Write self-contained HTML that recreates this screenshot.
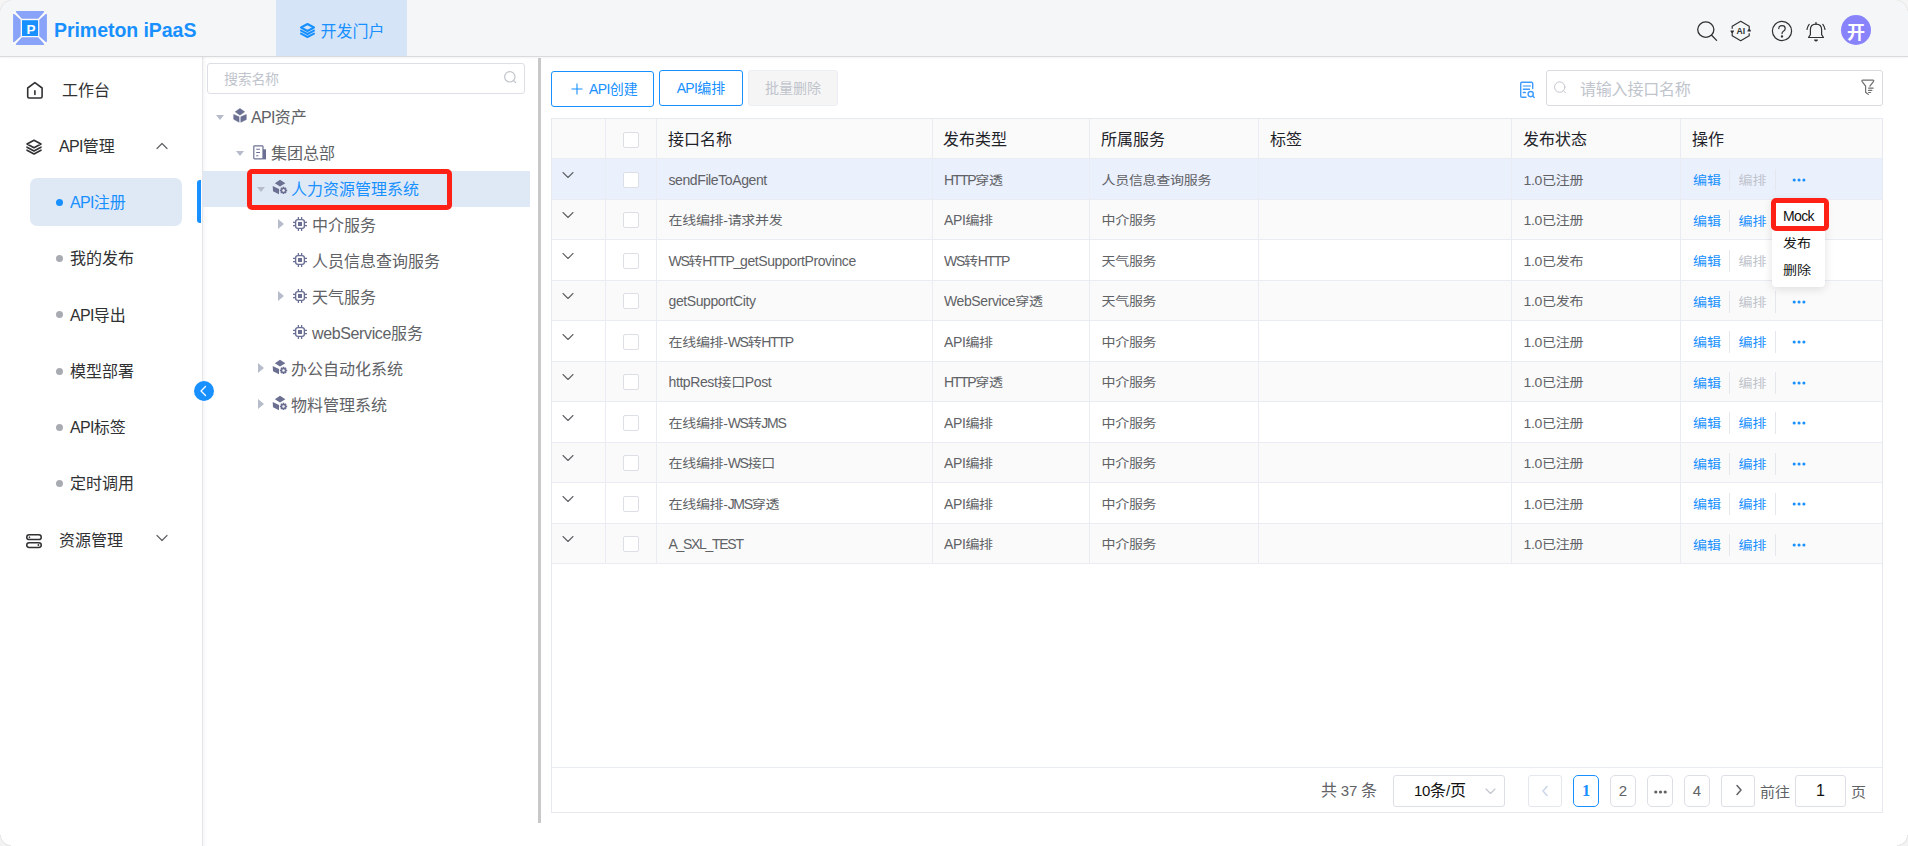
<!DOCTYPE html>
<html lang="zh-CN">
<head>
<meta charset="utf-8">
<title>Primeton iPaaS</title>
<style>
*{box-sizing:border-box;margin:0;padding:0}
html,body{width:1908px;height:846px;overflow:hidden;background:#fff}
body{font-family:"Liberation Sans","Noto Sans CJK SC",sans-serif;color:#606266;font-size:14px;position:relative}
.abs{position:absolute}
.l{letter-spacing:-0.045em}
.td .l{display:inline-block;transform:scaleY(1.1236);transform-origin:50% 74%;letter-spacing:-0.4px}
.td .u{letter-spacing:-1.3px}
/* header */
#hdr{position:absolute;left:0;top:0;width:1908px;height:57px;background:#f5f6f8;border-bottom:1px solid #d9dadd;box-shadow:0 1px 2px rgba(0,0,0,0.05);z-index:2}
#logo{position:absolute;left:13px;top:11px;width:34px;height:34px}
#brand{position:absolute;left:54px;top:17.5px;font-size:19.5px;letter-spacing:-0.05px;font-weight:bold;color:#1890ff;line-height:24px;white-space:nowrap}
#tab{position:absolute;left:276px;top:0;width:131px;height:56px;background:#d6e4f7;color:#1890ff;font-size:16px}
#tab span{position:absolute;left:44.5px;top:20px;line-height:24px;white-space:nowrap}
/* sidebar */
#side{position:absolute;left:0;top:57px;width:203px;height:789px;background:#fff;border-right:1px solid #e4e6ea}
.mi{position:absolute;margin-top:1px;font-size:16px;color:#303133;line-height:24px;white-space:nowrap}
.dot{position:absolute;width:7px;height:7px;border-radius:50%;background:#a8abb2}
/* tree */
#tree{position:absolute;left:203px;top:57px;width:334px;height:789px;background:#fff}
.tn{position:absolute;margin-top:1px;font-size:16px;color:#606266;line-height:24px;white-space:nowrap}
.car{position:absolute;width:0;height:0}
.car.d{border-left:4.5px solid transparent;border-right:4.5px solid transparent;border-top:5.5px solid #b7bcca}
.car.r{border-top:5px solid transparent;border-bottom:5px solid transparent;border-left:6.5px solid #b7bcca;margin-top:-0.5px}
/* main */
.btn{position:absolute;height:36px;border:1px solid #1890ff;border-radius:3px;color:#1890ff;font-size:14px;line-height:34px;text-align:center;background:#fff;white-space:nowrap}
#tbl{position:absolute;left:551px;top:118px;width:1332px;height:695px;border:1px solid #e6e9f0}
.row{position:absolute;left:0;width:1330px;border-bottom:1px solid #e9ecf3}
.vl{position:absolute;top:0;width:1px;background:#e9ecf3}
.th{position:absolute;font-size:16px;color:#1f2329;line-height:24px;white-space:nowrap}
.td{position:absolute;letter-spacing:-0.3px;font-size:14px;transform:scaleY(.89);transform-origin:50% 50%;color:#606266;line-height:20px;white-space:nowrap}
.cb{position:absolute;width:16px;height:16px;border:1px solid #dcdfe6;border-radius:2px;background:#fff}
.op{position:absolute;transform:scaleY(.88);font-size:14px;line-height:20px;color:#1890ff;white-space:nowrap}
.op.dis{color:#c0c4cc}
.sep{position:absolute;width:1px;height:22px;background:#e4e7ed}
.pg{position:absolute;top:775px;height:32px;border:1px solid #dcdfe6;border-radius:5px;background:#fff;font-size:15px;color:#606266;text-align:center;line-height:29px}
</style>
</head>
<body>
<svg width="0" height="0" style="position:absolute">
<defs>
<symbol id="i-cube" viewBox="0 0 14 15">
  <path d="M6.95 0.4 L11.7 3.8 L6.95 7.2 L2.2 3.8 Z" fill="#6b7092" stroke="#6b7092" stroke-width="0.5" stroke-linejoin="round"/>
  <path d="M0.7 6.5 L6.1 8.8 V14.3 L0.7 11.3 Z" fill="#6b7092" stroke="#6b7092" stroke-width="0.5" stroke-linejoin="round"/>
  <path d="M13.3 6.5 L7.8 8.8 V14.3 L13.3 11.6 Z" fill="#6b7092" stroke="#6b7092" stroke-width="0.5" stroke-linejoin="round"/>
</symbol>
<symbol id="i-org" viewBox="0 0 14 15">
  <rect x="0.8" y="0.8" width="9.2" height="13" rx="0.8" fill="none" stroke="#6b7092" stroke-width="1.2"/>
  <path d="M10 4.3 H13 V14.4 H10 Z" fill="#6b7092"/>
  <path d="M3.2 4.3 H7 M3.2 7.5 H7 M3.2 10.7 H5.4" stroke="#6b7092" stroke-width="1.1"/>
</symbol>
<symbol id="i-sys" viewBox="0 0 16 16">
  <path d="M8 0.8 L13.4 4.2 L8 7.6 L2.9 4.2 Z" fill="#6b7092"/>
  <path d="M0.7 7 L7 10 V15.2 L1 12.2 Z" fill="#6b7092"/>
  <circle cx="11.5" cy="11.4" r="2.1" fill="none" stroke="#6b7092" stroke-width="1.7"/>
  <path d="M11.5 7.7 V15.1 M7.8 11.4 H15.2 M8.9 8.8 L14.1 14 M14.1 8.8 L8.9 14" stroke="#6b7092" stroke-width="1.5"/>
  <circle cx="11.5" cy="11.4" r="1.25" fill="#fff" fill-opacity="0.95"/>
</symbol>
<symbol id="i-chip" viewBox="0 0 14 14">
  <rect x="2.6" y="2.6" width="8.8" height="8.8" rx="2.3" fill="none" stroke="#6b7092" stroke-width="1.4"/>
  <rect x="5" y="5" width="4" height="4" fill="#6b7092"/>
  <path d="M5.4 0 V2.5 M8.6 0 V2.5 M5.4 11.5 V14 M8.6 11.5 V14 M0 5.4 H2.5 M0 8.6 H2.5 M11.5 5.4 H14 M11.5 8.6 H14" stroke="#6b7092" stroke-width="1.3"/>
</symbol>
</defs></svg>
<div id="hdr">
  <svg id="logo" viewBox="0 0 34 34">
    <rect x="0" y="0" width="34" height="34" rx="4" fill="#fbfbf9"/>
    <g fill="#89a3f8" stroke="#89a3f8" stroke-width="1.4" stroke-linejoin="round">
      <path id="tz" d="M3.5 0.8 L30.5 0.8 L24.9 7 L9.1 7 Z"/>
      <use href="#tz" transform="rotate(90 17 17)"/>
      <use href="#tz" transform="rotate(180 17 17)"/>
      <use href="#tz" transform="rotate(270 17 17)"/>
    </g>
    <rect x="9" y="9.2" width="16.1" height="15.8" fill="#1890ff"/>
    <text x="18.1" y="22.5" font-size="13.5" font-weight="bold" fill="#fff" text-anchor="middle" font-family="Liberation Sans, sans-serif">P</text>
  </svg>
    <!-- right icons -->
  <svg class="abs" style="left:1695px;top:19px" width="24" height="24" viewBox="0 0 24 24" fill="none" stroke="#303133" stroke-width="1.3" stroke-linecap="round"><ellipse cx="10.8" cy="10.6" rx="8.1" ry="7.7"/><path d="M16.6 16.2 L21.6 21.4"/></svg>
  <svg class="abs" style="left:1729px;top:19px" width="24" height="24" viewBox="0 0 24 24" fill="none" stroke="#303133" stroke-width="1.2" stroke-linejoin="round">
    <path d="M3.2 9.8 V7.2 L11.7 2.3 L20.2 7.2 V9.8 M20.2 14.2 V16.8 L11.7 21.7 L3.2 16.8 V14.2"/>
    <path d="M2 12 L3.2 13.8 L4.4 12 Z M21.4 12 L20.2 10.2 L19 12 Z" fill="#303133"/>
    <text x="11.8" y="15.3" font-size="8.6" font-weight="bold" fill="#303133" stroke="none" text-anchor="middle" font-family="Liberation Sans, sans-serif">AI</text>
  </svg>
  <svg class="abs" style="left:1770px;top:19px" width="24" height="24" viewBox="0 0 24 24" fill="none" stroke="#303133" stroke-width="1.2" stroke-linecap="round"><circle cx="12" cy="12" r="9.6"/><path d="M8.8 9.6 Q8.8 6.6 12 6.6 Q15.2 6.6 15.2 9.4 Q15.2 11.2 13.4 12.2 Q12 13 12 14.6"/><circle cx="12" cy="17.4" r="0.6" fill="#303133"/></svg>
  <svg class="abs" style="left:1803.5px;top:20px" width="24" height="24" viewBox="0 0 24 24" fill="none" stroke="#303133" stroke-width="1.2" stroke-linecap="round" stroke-linejoin="round">
    <path d="M4.5 17.5 H19.5 L17.6 14.6 V9.6 Q17.6 4.2 12 4.2 Q6.4 4.2 6.4 9.6 V14.6 Z"/><path d="M12 4.2 V2.6"/><path d="M10.6 20 L12 21 L13.4 20 Z" fill="#303133"/>
    <path d="M5.2 4.4 Q3.4 6.6 3 9.4 M18.8 4.4 Q20.6 6.6 21 9.4"/>
  </svg>
  <div class="abs" style="left:1841px;top:15px;width:30px;height:30px;border-radius:50%;background:#8983fb;color:#fff;font-size:18px;font-weight:bold;text-align:center;line-height:30px;padding-top:3px">开</div>
  <div id="brand">Primeton iPaaS</div>
  <div id="tab">
    <svg class="abs" style="left:23px;top:22px" width="17" height="17" viewBox="0 0 17 17" fill="none" stroke="#1890ff" stroke-width="2" stroke-linejoin="round" stroke-linecap="round">
      <path d="M8.5 2 L15 5.5 L8.5 9 L2 5.5 Z"/><path d="M2 8.6 L8.5 12 L15 8.6"/><path d="M2 11.6 L8.5 15 L15 11.6"/>
    </svg>
    <span>开发门户</span>
  </div>
</div>
<div id="side">
  <!-- 工作台 -->
  <svg class="abs" style="left:26px;top:23px" width="18" height="20" viewBox="0 0 18 20" fill="none" stroke="#303133" stroke-width="1.6" stroke-linejoin="round" stroke-linecap="round">
    <path d="M1.7 8 L8.9 2.6 L16.1 8 V16.6 Q16.1 18 14.7 18 H3.1 Q1.7 18 1.7 16.6 Z"/><path d="M8.9 10.8 V14.4"/>
  </svg>
  <div class="mi" style="left:62px;top:21px">工作台</div>
  <!-- API管理 -->
  <svg class="abs" style="left:25px;top:81px" width="18" height="18" viewBox="0 0 18 18" fill="none" stroke="#303133" stroke-width="1.6" stroke-linejoin="round" stroke-linecap="round">
    <path d="M9 2.2 L16 6 L9 9.8 L2 6 Z"/><path d="M2 9.2 L9 13 L16 9.2"/><path d="M2 12.2 L9 16 L16 12.2"/>
  </svg>
  <div class="mi" style="left:59px;top:77px"><span class="l">API</span>管理</div>
  <svg class="abs" style="left:156px;top:85px" width="12" height="8" viewBox="0 0 12 8" fill="none" stroke="#606266" stroke-width="1.2" stroke-linecap="round" stroke-linejoin="round"><path d="M1 6.5 L6 1.5 L11 6.5"/></svg>
  <!-- selected -->
  <div class="abs" style="left:30px;top:121px;width:152px;height:48px;border-radius:7px;background:#dfe9f6"></div>
  <div class="abs" style="left:197px;top:123px;width:4px;height:43px;background:#1890ff;border-radius:3px 0 0 3px"></div>
  <div class="dot" style="left:56px;top:142px;background:#1890ff"></div>
  <div class="mi" style="left:70px;top:133px;color:#1890ff"><span class="l">API</span>注册</div>
  <div class="dot" style="left:56px;top:198px"></div>
  <div class="mi" style="left:70px;top:189px">我的发布</div>
  <div class="dot" style="left:56px;top:254px"></div>
  <div class="mi" style="left:70px;top:246px"><span class="l">API</span>导出</div>
  <div class="dot" style="left:56px;top:311px"></div>
  <div class="mi" style="left:70px;top:302px">模型部署</div>
  <div class="dot" style="left:56px;top:367px"></div>
  <div class="mi" style="left:70px;top:358px"><span class="l">API</span>标签</div>
  <div class="dot" style="left:56px;top:423px"></div>
  <div class="mi" style="left:70px;top:414px">定时调用</div>
  <!-- 资源管理 -->
  <svg class="abs" style="left:25px;top:476px" width="18" height="18" viewBox="0 0 18 18" fill="none" stroke="#303133" stroke-width="1.5">
    <rect x="1.75" y="1.75" width="14.5" height="4.8" rx="2.4"/><rect x="1.75" y="9.65" width="14.5" height="4.8" rx="2.4"/>
    <circle cx="4.4" cy="4.2" r="0.5" fill="#303133" stroke-width="0.8"/><circle cx="13.4" cy="12" r="0.6" fill="#303133" stroke-width="1"/>
  </svg>
  <div class="mi" style="left:59px;top:471px">资源管理</div>
  <svg class="abs" style="left:156px;top:477px" width="12" height="8" viewBox="0 0 12 8" fill="none" stroke="#606266" stroke-width="1.2" stroke-linecap="round" stroke-linejoin="round"><path d="M1 1.5 L6 6.5 L11 1.5"/></svg>
</div>
<div id="tree">
  <div class="abs" style="left:0;top:0;width:4px;height:789px;background:linear-gradient(90deg,rgba(0,0,0,0.035),rgba(0,0,0,0))"></div>
  <div class="abs" style="left:4px;top:6px;width:318px;height:31px;border:1px solid #dcdfe6;border-radius:3px"></div>
  <div class="abs" style="left:21px;top:12px;font-size:14px;line-height:20px;color:#c0c4cc;letter-spacing:-0.3px">搜索名称</div>
  <svg class="abs" style="left:300px;top:13px" width="15" height="15" viewBox="0 0 15 15" fill="none" stroke="#c0c4cc" stroke-width="1.2" stroke-linecap="round"><circle cx="6.8" cy="6.8" r="5.2"/><path d="M10.6 10.6 L12.6 12.6"/></svg>
  <!-- highlight row -->
  <div class="abs" style="left:0;top:114px;width:327px;height:36px;background:#dfe9f6"></div>
  <!-- nodes -->
  <div class="car d" style="left:13px;top:58px"></div>
  <svg class="abs" style="left:29.5px;top:50.5px" width="14" height="15"><use href="#i-cube"/></svg>
  <div class="tn" style="left:48px;top:48px"><span class="l">API</span>资产</div>

  <div class="car d" style="left:33px;top:94px"></div>
  <svg class="abs" style="left:50px;top:88px" width="14" height="15"><use href="#i-org"/></svg>
  <div class="tn" style="left:68px;top:84px">集团总部</div>

  <div class="car d" style="left:54px;top:130px"></div>
  <svg class="abs" style="left:69px;top:122px" width="16" height="16"><use href="#i-sys"/></svg>
  <div class="tn" style="left:88px;top:120px;color:#1890ff">人力资源管理系统</div>

  <div class="car r" style="left:75px;top:162px"></div>
  <svg class="abs" style="left:90px;top:160px" width="14" height="14"><use href="#i-chip"/></svg>
  <div class="tn" style="left:109px;top:156px">中介服务</div>

  <svg class="abs" style="left:90px;top:196px" width="14" height="14"><use href="#i-chip"/></svg>
  <div class="tn" style="left:109px;top:192px">人员信息查询服务</div>

  <div class="car r" style="left:75px;top:234px"></div>
  <svg class="abs" style="left:90px;top:232px" width="14" height="14"><use href="#i-chip"/></svg>
  <div class="tn" style="left:109px;top:228px">天气服务</div>

  <svg class="abs" style="left:90px;top:268px" width="14" height="14"><use href="#i-chip"/></svg>
  <div class="tn" style="left:109px;top:264px"><span style="letter-spacing:-0.37px">webService</span>服务</div>

  <div class="car r" style="left:55px;top:306px"></div>
  <svg class="abs" style="left:69px;top:302px" width="16" height="16"><use href="#i-sys"/></svg>
  <div class="tn" style="left:88px;top:300px">办公自动化系统</div>

  <div class="car r" style="left:55px;top:342px"></div>
  <svg class="abs" style="left:69px;top:338px" width="16" height="16"><use href="#i-sys"/></svg>
  <div class="tn" style="left:88px;top:336px">物料管理系统</div>

  <!-- red annotation -->
  <div class="abs" style="left:43.5px;top:111.5px;width:205px;height:41px;border:5px solid #ff2116;border-radius:5px"></div>
</div>
<div class="abs" style="left:538px;top:58px;width:3px;height:765px;background:#c8c8c8"></div>
<div class="abs" style="left:194px;top:380.5px;width:20px;height:20px;border-radius:50%;background:#1890ff">
  <svg class="abs" style="left:4px;top:4px" width="12" height="12" viewBox="0 0 12 12" fill="none" stroke="#fff" stroke-width="1.3" stroke-linecap="round" stroke-linejoin="round"><path d="M7.5 1.5 L3 6 L7.5 10.5"/></svg>
</div>
<div id="main">
<div class="btn" style="left:551px;top:71px;width:103px"><svg style="position:absolute;left:19px;top:11px" width="12" height="12" viewBox="0 0 12 12" stroke="#1890ff" stroke-width="1.1"><path d="M6 0.5 V11.5 M0.5 6 H11.5"/></svg><span style="position:absolute;left:37px;top:0"><span class="l">API</span>创建</span></div>
<div class="btn" style="left:659px;top:70px;width:84px"><span class="l">API</span>编排</div>
<div class="btn" style="left:748px;top:70px;width:90px;border-color:#ebeef5;background:#f5f5f5;color:#c0c4cc">批量删除</div>
<svg class="abs" style="left:1519px;top:81px" width="17" height="18" viewBox="0 0 17 18" fill="none" stroke="#3f9cff" stroke-width="1.4" stroke-linecap="round" stroke-linejoin="round"><path d="M13.7 7.5 V2.6 Q13.7 1.3 12.4 1.3 H3 Q1.7 1.3 1.7 2.6 V15 Q1.7 16.3 3 16.3 H7"/><path d="M4.4 5 H11.3" stroke-opacity="0.75" stroke-width="1.5"/><path d="M4.3 8.3 H10.5 M4.3 11.5 H6.4"/><circle cx="11.7" cy="13.1" r="2.6"/><path d="M13.7 15.1 L15.2 16.6"/></svg>
<div class="abs" style="left:1546px;top:70px;width:337px;height:36px;border:1px solid #d9dbe0;border-radius:3px;background:#fff"></div>
<svg class="abs" style="left:1554px;top:81px" width="14" height="14" viewBox="0 0 14 14" fill="none" stroke="#c3c7cf" stroke-width="1" stroke-linecap="round"><circle cx="5.7" cy="6.1" r="5.2"/><path d="M9.6 9.9 L11.6 11.9"/></svg>
<div class="abs" style="left:1580px;top:78px;font-size:16px;line-height:24px;color:#c0c4cc;letter-spacing:-0.2px">请输入接口名称</div>
<svg class="abs" style="left:1860px;top:79px" width="16" height="17" viewBox="0 0 16 17" fill="none" stroke="#6e6e6e" stroke-width="1.2" stroke-linejoin="round" stroke-linecap="round"><path d="M9.9 7.2 L13.4 2.6 Q14.3 1.1 12.8 1.1 H2.9 Q1.3 1.1 2.2 2.6 L5.6 7.2 V13.2 L8.3 15.4"/><path d="M8.6 9.1 H13.2 M8.6 11.4 H11.8 M8.6 13.5 H10.6"/></svg>
<div id="tbl">
<div class="row" style="top:0;height:40.0px;background:#fafafa"></div>
<div class="row" style="top:40.0px;height:40.5px;background:#ebf0fd"></div>
<div class="row" style="top:80.5px;height:40.5px;background:#fafafa"></div>
<div class="row" style="top:121.0px;height:40.5px;background:#fff"></div>
<div class="row" style="top:161.5px;height:40.5px;background:#fafafa"></div>
<div class="row" style="top:202.0px;height:40.5px;background:#fff"></div>
<div class="row" style="top:242.5px;height:40.5px;background:#fafafa"></div>
<div class="row" style="top:283.0px;height:40.5px;background:#fff"></div>
<div class="row" style="top:323.5px;height:40.5px;background:#fafafa"></div>
<div class="row" style="top:364.0px;height:40.5px;background:#fff"></div>
<div class="row" style="top:404.5px;height:40.5px;background:#fafafa"></div>
<div class="vl" style="left:53px;height:445.0px"></div>
<div class="vl" style="left:104px;height:445.0px"></div>
<div class="vl" style="left:380px;height:445.0px"></div>
<div class="vl" style="left:537px;height:445.0px"></div>
<div class="vl" style="left:706px;height:445.0px"></div>
<div class="vl" style="left:959px;height:445.0px"></div>
<div class="vl" style="left:1128px;height:445.0px"></div>
<div class="cb" style="left:71px;top:13px"></div>
<div class="th" style="left:116px;top:9px">接口名称</div>
<div class="th" style="left:391px;top:9px">发布类型</div>
<div class="th" style="left:549px;top:9px">所属服务</div>
<div class="th" style="left:718px;top:9px">标签</div>
<div class="th" style="left:971px;top:9px">发布状态</div>
<div class="th" style="left:1140px;top:9px">操作</div>
<svg class="abs" style="left:10px;top:51.8px" width="12" height="8" viewBox="0 0 12 8" fill="none" stroke="#606266" stroke-width="1.1" stroke-linecap="round" stroke-linejoin="round"><path d="M1 1.5 L6 6.5 L11 1.5"/></svg>
<div class="cb" style="left:71px;top:52.8px"></div>
<div class="td" style="left:116.5px;top:51.5px"><span class='l'>sendFileToAgent</span></div>
<div class="td" style="left:392px;top:51.5px"><span class='l u'>HTTP</span>穿透</div>
<div class="td" style="left:549.5px;top:51.5px">人员信息查询服务</div>
<div class="td" style="left:971.5px;top:51.5px">1.0已注册</div>
<div class="op" style="left:1141px;top:52.2px">编辑</div>
<div class="sep" style="left:1177px;top:50.2px"></div>
<div class="op dis" style="left:1186.5px;top:52.2px">编排</div>
<div class="sep" style="left:1223px;top:50.2px"></div>
<svg class="abs" style="left:1239.6px;top:59.1px" width="14" height="4" viewBox="0 0 14 4" fill="#1890ff"><circle cx="2.2" cy="2" r="1.55"/><circle cx="7.05" cy="2" r="1.55"/><circle cx="11.9" cy="2" r="1.55"/></svg>
<svg class="abs" style="left:10px;top:92.2px" width="12" height="8" viewBox="0 0 12 8" fill="none" stroke="#606266" stroke-width="1.1" stroke-linecap="round" stroke-linejoin="round"><path d="M1 1.5 L6 6.5 L11 1.5"/></svg>
<div class="cb" style="left:71px;top:93.2px"></div>
<div class="td" style="left:116.5px;top:92.0px">在线编排-请求并发</div>
<div class="td" style="left:392px;top:92.0px"><span class='l'>API</span>编排</div>
<div class="td" style="left:549.5px;top:92.0px">中介服务</div>
<div class="td" style="left:971.5px;top:92.0px">1.0已注册</div>
<div class="op" style="left:1141px;top:92.8px">编辑</div>
<div class="sep" style="left:1177px;top:90.8px"></div>
<div class="op" style="left:1186.5px;top:92.8px">编排</div>
<div class="sep" style="left:1223px;top:90.8px"></div>
<svg class="abs" style="left:10px;top:132.8px" width="12" height="8" viewBox="0 0 12 8" fill="none" stroke="#606266" stroke-width="1.1" stroke-linecap="round" stroke-linejoin="round"><path d="M1 1.5 L6 6.5 L11 1.5"/></svg>
<div class="cb" style="left:71px;top:133.8px"></div>
<div class="td" style="left:116.5px;top:132.6px"><span class='l u'>WS</span>转<span class='l u'>HTTP_</span><span class='l'>getSupportProvince</span></div>
<div class="td" style="left:392px;top:132.6px"><span class='l u'>WS</span>转<span class='l u'>HTTP</span></div>
<div class="td" style="left:549.5px;top:132.6px">天气服务</div>
<div class="td" style="left:971.5px;top:132.6px">1.0已发布</div>
<div class="op" style="left:1141px;top:133.2px">编辑</div>
<div class="sep" style="left:1177px;top:131.2px"></div>
<div class="op dis" style="left:1186.5px;top:133.2px">编排</div>
<div class="sep" style="left:1223px;top:131.2px"></div>
<svg class="abs" style="left:10px;top:173.2px" width="12" height="8" viewBox="0 0 12 8" fill="none" stroke="#606266" stroke-width="1.1" stroke-linecap="round" stroke-linejoin="round"><path d="M1 1.5 L6 6.5 L11 1.5"/></svg>
<div class="cb" style="left:71px;top:174.2px"></div>
<div class="td" style="left:116.5px;top:173.1px"><span class='l'>getSupportCity</span></div>
<div class="td" style="left:392px;top:173.1px"><span class='l'>WebService</span>穿透</div>
<div class="td" style="left:549.5px;top:173.1px">天气服务</div>
<div class="td" style="left:971.5px;top:173.1px">1.0已发布</div>
<div class="op" style="left:1141px;top:173.8px">编辑</div>
<div class="sep" style="left:1177px;top:171.8px"></div>
<div class="op dis" style="left:1186.5px;top:173.8px">编排</div>
<div class="sep" style="left:1223px;top:171.8px"></div>
<svg class="abs" style="left:1239.6px;top:180.7px" width="14" height="4" viewBox="0 0 14 4" fill="#1890ff"><circle cx="2.2" cy="2" r="1.55"/><circle cx="7.05" cy="2" r="1.55"/><circle cx="11.9" cy="2" r="1.55"/></svg>
<svg class="abs" style="left:10px;top:213.8px" width="12" height="8" viewBox="0 0 12 8" fill="none" stroke="#606266" stroke-width="1.1" stroke-linecap="round" stroke-linejoin="round"><path d="M1 1.5 L6 6.5 L11 1.5"/></svg>
<div class="cb" style="left:71px;top:214.8px"></div>
<div class="td" style="left:116.5px;top:213.6px">在线编排-<span class='l u'>WS</span>转<span class='l u'>HTTP</span></div>
<div class="td" style="left:392px;top:213.6px"><span class='l'>API</span>编排</div>
<div class="td" style="left:549.5px;top:213.6px">中介服务</div>
<div class="td" style="left:971.5px;top:213.6px">1.0已注册</div>
<div class="op" style="left:1141px;top:214.2px">编辑</div>
<div class="sep" style="left:1177px;top:212.2px"></div>
<div class="op" style="left:1186.5px;top:214.2px">编排</div>
<div class="sep" style="left:1223px;top:212.2px"></div>
<svg class="abs" style="left:1239.6px;top:221.2px" width="14" height="4" viewBox="0 0 14 4" fill="#1890ff"><circle cx="2.2" cy="2" r="1.55"/><circle cx="7.05" cy="2" r="1.55"/><circle cx="11.9" cy="2" r="1.55"/></svg>
<svg class="abs" style="left:10px;top:254.2px" width="12" height="8" viewBox="0 0 12 8" fill="none" stroke="#606266" stroke-width="1.1" stroke-linecap="round" stroke-linejoin="round"><path d="M1 1.5 L6 6.5 L11 1.5"/></svg>
<div class="cb" style="left:71px;top:255.2px"></div>
<div class="td" style="left:116.5px;top:254.1px"><span class='l'>httpRest</span>接口<span class='l'>Post</span></div>
<div class="td" style="left:392px;top:254.1px"><span class='l u'>HTTP</span>穿透</div>
<div class="td" style="left:549.5px;top:254.1px">中介服务</div>
<div class="td" style="left:971.5px;top:254.1px">1.0已注册</div>
<div class="op" style="left:1141px;top:254.8px">编辑</div>
<div class="sep" style="left:1177px;top:252.8px"></div>
<div class="op dis" style="left:1186.5px;top:254.8px">编排</div>
<div class="sep" style="left:1223px;top:252.8px"></div>
<svg class="abs" style="left:1239.6px;top:261.6px" width="14" height="4" viewBox="0 0 14 4" fill="#1890ff"><circle cx="2.2" cy="2" r="1.55"/><circle cx="7.05" cy="2" r="1.55"/><circle cx="11.9" cy="2" r="1.55"/></svg>
<svg class="abs" style="left:10px;top:294.8px" width="12" height="8" viewBox="0 0 12 8" fill="none" stroke="#606266" stroke-width="1.1" stroke-linecap="round" stroke-linejoin="round"><path d="M1 1.5 L6 6.5 L11 1.5"/></svg>
<div class="cb" style="left:71px;top:295.8px"></div>
<div class="td" style="left:116.5px;top:294.6px">在线编排-<span class='l u'>WS</span>转<span class='l u'>JMS</span></div>
<div class="td" style="left:392px;top:294.6px"><span class='l'>API</span>编排</div>
<div class="td" style="left:549.5px;top:294.6px">中介服务</div>
<div class="td" style="left:971.5px;top:294.6px">1.0已注册</div>
<div class="op" style="left:1141px;top:295.2px">编辑</div>
<div class="sep" style="left:1177px;top:293.2px"></div>
<div class="op" style="left:1186.5px;top:295.2px">编排</div>
<div class="sep" style="left:1223px;top:293.2px"></div>
<svg class="abs" style="left:1239.6px;top:302.1px" width="14" height="4" viewBox="0 0 14 4" fill="#1890ff"><circle cx="2.2" cy="2" r="1.55"/><circle cx="7.05" cy="2" r="1.55"/><circle cx="11.9" cy="2" r="1.55"/></svg>
<svg class="abs" style="left:10px;top:335.2px" width="12" height="8" viewBox="0 0 12 8" fill="none" stroke="#606266" stroke-width="1.1" stroke-linecap="round" stroke-linejoin="round"><path d="M1 1.5 L6 6.5 L11 1.5"/></svg>
<div class="cb" style="left:71px;top:336.2px"></div>
<div class="td" style="left:116.5px;top:335.1px">在线编排-<span class='l u'>WS</span>接口</div>
<div class="td" style="left:392px;top:335.1px"><span class='l'>API</span>编排</div>
<div class="td" style="left:549.5px;top:335.1px">中介服务</div>
<div class="td" style="left:971.5px;top:335.1px">1.0已注册</div>
<div class="op" style="left:1141px;top:335.8px">编辑</div>
<div class="sep" style="left:1177px;top:333.8px"></div>
<div class="op" style="left:1186.5px;top:335.8px">编排</div>
<div class="sep" style="left:1223px;top:333.8px"></div>
<svg class="abs" style="left:1239.6px;top:342.6px" width="14" height="4" viewBox="0 0 14 4" fill="#1890ff"><circle cx="2.2" cy="2" r="1.55"/><circle cx="7.05" cy="2" r="1.55"/><circle cx="11.9" cy="2" r="1.55"/></svg>
<svg class="abs" style="left:10px;top:375.8px" width="12" height="8" viewBox="0 0 12 8" fill="none" stroke="#606266" stroke-width="1.1" stroke-linecap="round" stroke-linejoin="round"><path d="M1 1.5 L6 6.5 L11 1.5"/></svg>
<div class="cb" style="left:71px;top:376.8px"></div>
<div class="td" style="left:116.5px;top:375.6px">在线编排-<span class='l u'>JMS</span>穿透</div>
<div class="td" style="left:392px;top:375.6px"><span class='l'>API</span>编排</div>
<div class="td" style="left:549.5px;top:375.6px">中介服务</div>
<div class="td" style="left:971.5px;top:375.6px">1.0已注册</div>
<div class="op" style="left:1141px;top:376.2px">编辑</div>
<div class="sep" style="left:1177px;top:374.2px"></div>
<div class="op" style="left:1186.5px;top:376.2px">编排</div>
<div class="sep" style="left:1223px;top:374.2px"></div>
<svg class="abs" style="left:1239.6px;top:383.1px" width="14" height="4" viewBox="0 0 14 4" fill="#1890ff"><circle cx="2.2" cy="2" r="1.55"/><circle cx="7.05" cy="2" r="1.55"/><circle cx="11.9" cy="2" r="1.55"/></svg>
<svg class="abs" style="left:10px;top:416.2px" width="12" height="8" viewBox="0 0 12 8" fill="none" stroke="#606266" stroke-width="1.1" stroke-linecap="round" stroke-linejoin="round"><path d="M1 1.5 L6 6.5 L11 1.5"/></svg>
<div class="cb" style="left:71px;top:417.2px"></div>
<div class="td" style="left:116.5px;top:416.1px"><span class='l u'>A_SXL_TEST</span></div>
<div class="td" style="left:392px;top:416.1px"><span class='l'>API</span>编排</div>
<div class="td" style="left:549.5px;top:416.1px">中介服务</div>
<div class="td" style="left:971.5px;top:416.1px">1.0已注册</div>
<div class="op" style="left:1141px;top:416.8px">编辑</div>
<div class="sep" style="left:1177px;top:414.8px"></div>
<div class="op" style="left:1186.5px;top:416.8px">编排</div>
<div class="sep" style="left:1223px;top:414.8px"></div>
<svg class="abs" style="left:1239.6px;top:423.6px" width="14" height="4" viewBox="0 0 14 4" fill="#1890ff"><circle cx="2.2" cy="2" r="1.55"/><circle cx="7.05" cy="2" r="1.55"/><circle cx="11.9" cy="2" r="1.55"/></svg>
<div class="abs" style="left:0;top:648px;width:1330px;height:1px;background:#e9ecf3"></div>
</div>
<div class="abs" style="left:1321px;top:779px;font-size:16px;line-height:24px;color:#606266;white-space:nowrap;word-spacing:-0.8px">共 <span style="font-size:15px">37</span> 条</div>
<div class="pg" style="left:1393px;width:112px;border-radius:3px"></div>
<div class="abs" style="left:1414px;top:779px;font-size:16px;line-height:24px;color:#111;white-space:nowrap"><span style="font-size:15px;letter-spacing:-0.4px">10</span>条<span style="font-size:15px">/</span>页</div>
<svg class="abs" style="left:1485px;top:788px" width="11" height="7" viewBox="0 0 11 7" fill="none" stroke="#c0c4cc" stroke-width="1.1" stroke-linecap="round" stroke-linejoin="round"><path d="M1 1 L5.5 5.5 L10 1"/></svg>
<div class="pg" style="left:1528px;width:34px;border-radius:3px;border-color:#e4e7ed"><svg style="position:absolute;left:12px;top:9px" width="8" height="12" viewBox="0 0 8 12" fill="none" stroke="#cdd7ea" stroke-width="1.6" stroke-linecap="round" stroke-linejoin="round"><path d="M6 1.5 L2 6 L6 10.5"/></svg></div>
<div class="pg" style="left:1573px;width:26px;border-color:#1890ff;color:#1890ff;font-weight:bold;font-size:16.5px;font-family:'Liberation Serif',serif">1</div>
<div class="pg" style="left:1610px;width:26px">2</div>
<div class="pg" style="left:1647px;width:26px"><svg style="position:absolute;left:5.5px;top:14px" width="13" height="4" viewBox="0 0 13 4" fill="#606266"><circle cx="1.8" cy="2" r="1.6"/><circle cx="6.5" cy="2" r="1.6"/><circle cx="11.2" cy="2" r="1.6"/></svg></div>
<div class="pg" style="left:1684px;width:26px">4</div>
<div class="pg" style="left:1721px;width:34px;border-radius:3px"><svg style="position:absolute;left:13px;top:8.3px" width="8" height="12" viewBox="0 0 8 12" fill="none" stroke="#606266" stroke-width="1.5" stroke-linecap="round" stroke-linejoin="round"><path d="M2 1.5 L6 6 L2 10.5"/></svg></div>
<div class="abs" style="left:1760px;top:780px;font-size:15px;line-height:24px;color:#606266;transform:scaleY(.9)">前往</div>
<div class="pg" style="left:1795px;width:51px;border-radius:3px;color:#111;font-size:16px;line-height:29px">1</div>
<div class="abs" style="left:1851px;top:780px;font-size:15px;line-height:24px;color:#606266;transform:scaleY(.9)">页</div>
<div class="abs" style="left:1772px;top:199px;width:53px;height:88px;background:#fff;border-radius:4px;box-shadow:0 2px 10px rgba(0,0,0,0.12)"></div>
<div class="abs" style="left:1783px;top:206px;font-size:14px;line-height:20px;color:#111"><span class="l">Mock</span></div>
<div class="abs" style="left:1783px;top:234px;font-size:14px;line-height:20px;color:#111;transform:scaleY(.88)">发布</div>
<div class="abs" style="left:1783px;top:260.7px;font-size:14px;line-height:20px;color:#111;transform:scaleY(.88)">删除</div>
<div class="abs" style="left:1770.5px;top:198px;width:58px;height:33px;border:5px solid #ff2116;border-radius:5px"></div>
</div>
<div class="abs" style="left:0;top:835px;width:11px;height:11px;z-index:9;background:radial-gradient(circle at 11px 0,rgba(0,0,0,0) 9.6px,#e2e2e2 10.3px,#f3f3f3 11.2px)"></div>
<div class="abs" style="left:1897px;top:835px;width:11px;height:11px;z-index:9;background:radial-gradient(circle at 0 0,rgba(0,0,0,0) 9.6px,#e2e2e2 10.3px,#f3f3f3 11.2px)"></div>
<div class="abs" style="left:0;top:0;width:11px;height:11px;z-index:9;background:radial-gradient(circle at 11px 11px,rgba(0,0,0,0) 9.6px,#e6e6e6 10.3px,#f5f5f5 11.2px)"></div>
<div class="abs" style="left:1897px;top:0;width:11px;height:11px;z-index:9;background:radial-gradient(circle at 0 11px,rgba(0,0,0,0) 9.6px,#e6e6e6 10.3px,#f5f5f5 11.2px)"></div>
</body>
</html>
